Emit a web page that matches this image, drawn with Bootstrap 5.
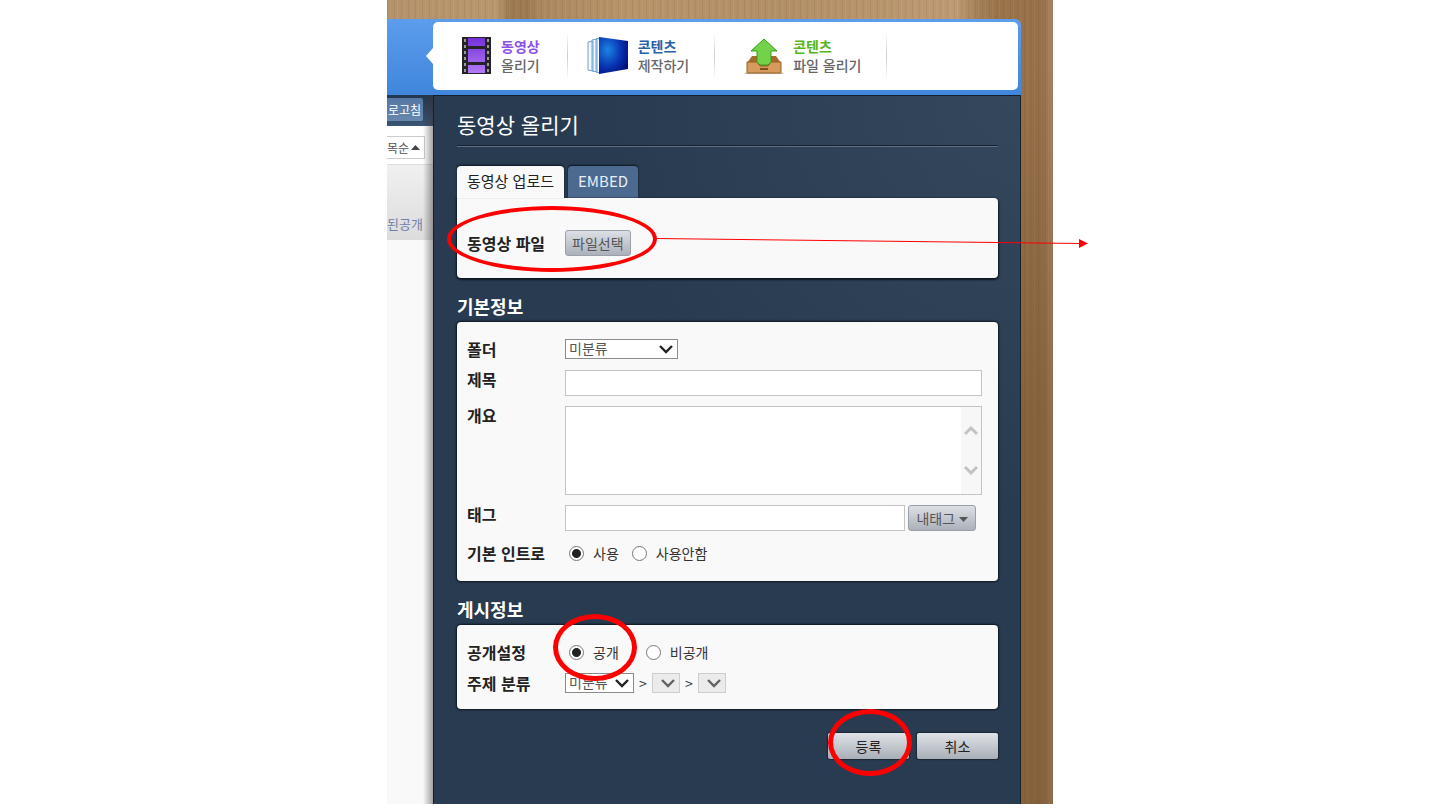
<!DOCTYPE html>
<html lang="ko">
<head>
<meta charset="utf-8">
<meta name="viewport" content="width=device-width, initial-scale=1">
<title>동영상 올리기</title>
<link href="https://cdn.jsdelivr.net/npm/bootstrap@5.3.0/dist/css/bootstrap.min.css" rel="stylesheet">
<style>
  body { font: 14px/20px "Noto Sans CJK KR", sans-serif; color: #333; background: #fff; }
  .stage { max-width: 666px; min-height: calc(100vh - 6px); padding: 19px 32px 0 0;
    background:
      linear-gradient(to bottom, transparent 60px, rgba(100,68,34,.35) 420px),
      repeating-linear-gradient(90deg, rgba(70,40,10,.08) 0 1px, transparent 1px 3px, rgba(255,230,190,.06) 3px 4px, transparent 4px 7px),
      linear-gradient(90deg, #b4936c 0, #b8966e 110px, #9d7a52 122px, #9d7a52 140px, #ac8860 155px, #b8946b 240px, #b28f67 400px, #bd9a73 570px, #a58059 590px, #9a744b 610px, #98714a 640px, #95704a 655px, #ab8560 666px); }
  .topbar { height: 76px; padding: 3px 3px 5px 46px; border-radius: 0 6px 0 0; background: linear-gradient(#5c9dec, #3f86dc); }
  .menu { height: 68px; border-radius: 5px; background: #fff; position: relative; padding-left: 28px; }
  .menu::before { content: ""; position: absolute; left: -7px; top: 26px; border: 8px solid transparent; border-right: 7px solid #fff; border-left: 0; }
  .menu a { gap: 9px; color: #666; font-weight: 500; line-height: 19px; text-decoration: none; }
  .menu b { display: block; font-weight: 700; }
  .menu svg { flex: none; }
  .t-violet { color: #8e50e8; }
  .t-blue { color: #285fa8; }
  .t-green { color: #55b51c; }
  .divide { width: 1px; height: 48px; background: linear-gradient(#fff, #ccc 50%, #fff); }
  .below { min-height: calc(100vh - 101px); }
  .side { width: 46px; flex: none; background: #f9f9f9; position: relative; }
  .side::after { content: ""; position: absolute; inset: 0 0 0 auto; width: 10px; background: linear-gradient(90deg, transparent, rgba(60,50,50,.45)); pointer-events: none; }
  .side-top { height: 31px; padding: 3px 10px 0 0; background: linear-gradient(#22364e, #3a5474); }
  .side button { display: flex; align-items: center; justify-content: flex-end; width: 100%; height: 23px; font-size: 12px; line-height: 20px; white-space: nowrap; }
  .reload { padding: 0 2px 0 0; border: 0; border-radius: 0 2px 2px 0; background: linear-gradient(#5477a3, #6887ae); color: #fff; }
  .side-sort { height: 39px; padding: 10px 8px 0 0; background: #fff; border-bottom: 1px solid #ddd; }
  .sort { gap: 2px; padding: 0 4px 0 0; border: 1px solid #ccc; border-left: 0; background: #fff; color: #555; }
  .side-item { height: 75px; padding: 48px 10px 0 0; text-align: right; white-space: nowrap; background: linear-gradient(#f0f0f0, #dcdcdc); }
  .side-item a { color: #7080ab; font-size: 13px; text-decoration: none; }
  .work { min-width: 0; padding: 14px 22px 42px 23px; border: solid #15202c; border-width: 1px 1px 0 1px;
    background: radial-gradient(ellipse 420px 420px at 100% 0, #34475d, #293b50); }
  h1 { font-size: 21px; line-height: 28px; margin: 0 0 19px; padding-bottom: 8px; color: #fff; font-weight: 400; border-bottom: 1px solid #5d7085; box-shadow: 0 -1px #16222f inset; }
  h2 { font-size: 18px; line-height: 24px; margin: 16px 0 4px; color: #fff; font-weight: 700; }
  .tabs { gap: 4px; }
  .tabs button { height: 32px; border: 0; border-radius: 4px 4px 0 0; box-shadow: 0 -1px 2px #0c1520; background: #4c6990; color: #e8eef6; padding: 0 10px 2px; font-size: 15px; }
  .tabs .on { background: #f9f9f9; color: #222; position: relative; z-index: 1; }
  .pane { position: relative; background: #f9f9f9; border-radius: 4px; box-shadow: 0 0 2px 1px #0c1520; padding: 17px 16px 16px 10px; }
  .pane-file { border-top-left-radius: 0; box-shadow: 0 1px 2px 1px #0c1520; padding: 32px 16px 22px 10px; }
  .cap { width: 98px; flex: none; font-size: 16px; line-height: 18px; font-weight: 700; color: #222; }
  .line { margin-top: 10px; }
  .line-after-pick { margin-top: 11px; }
  .radios { height: 24px; }
  .field { border: 1px solid #c4c4c4; background: #fff; height: 26px; width: 100%; min-width: 0; border-radius: 0; padding: 0 4px; }
  textarea.field { height: 89px; resize: none; display: block; }
  .pick { appearance: none; height: 20px; border: 1px solid #8c8c8c; color: #555; border-radius: 0; padding: 0 3px 2px; line-height: 16px; width: 113px;
    background: #fff url("data:image/svg+xml,%3Csvg xmlns='http://www.w3.org/2000/svg' width='14' height='9'%3E%3Cpath d='M1 1l6 6 6-6' fill='none' stroke='%23222' stroke-width='2.4'/%3E%3C/svg%3E") no-repeat right 4px center; }
  .pick-s { width: 69px; }
  .pick:disabled { width: 28px; background-color: #e6e6e6; border-color: #bbb; opacity: .7; }
  .sep { width: 18px; text-align: center; }
  .gbtn { border: 1px solid #9a9fa8; border-radius: 3px; background: linear-gradient(#dde0e6, #abb1ba); color: #555; height: 26px; padding: 0 6px; line-height: 22px; flex: none; }
  .gbtn-tag { padding: 0 7px; margin: 0 6px 0 3px; }
  .act { width: 81px; border: 0; border-radius: 2px; color: #222; box-shadow: 0 0 1px 1px #1a2734; background: linear-gradient(#dfe2e7, #a9afb8); }
  .actions { gap: 8px; margin-top: 24px; }
  input[type=radio] { appearance: none; width: 15px; height: 15px; margin: 0; border: 1px solid #777; border-radius: 50%; background: #fff; flex: none; }
  input[type=radio]:checked { background: radial-gradient(#222 0 4px, #fff 5px); }
  .opt { display: flex; align-items: center; gap: 9px; }
  .opt + .opt { margin-left: 13px; }
  .opt-far + .opt { margin-left: 27px; }
  .bars { position: absolute; right: 1px; top: 1px; width: 20px; height: 87px; background: #f7f7f7; pointer-events: none; }
  .ring { position: absolute; border: 5px solid #f00; border-radius: 50%; pointer-events: none; }
  .ring-file { left: -10px; top: 8px; width: 210px; height: 66px; border-width: 4px; }
  .ring-small { width: 84px; height: 67px; }
  .ring-open { left: 96px; top: -11px; }
  .ring-send { left: 0; top: -24px; }
  .arrow { position: absolute; left: 199px; top: 36px; pointer-events: none; overflow: visible; }
</style>
</head>
<body>
<main class="stage mx-auto">
  <header class="topbar">
    <nav class="menu d-flex align-items-center">
      <a href="#" class="d-flex align-items-center"><svg width="31" height="40" viewBox="0 0 31 40"><defs><linearGradient id="pv" x2="0" y2="1"><stop stop-color="#7430d8"/><stop offset="1" stop-color="#b27bf6"/></linearGradient></defs><path fill="#252229" d="M1 1h29v37H1z"/><path fill="url(#pv)" d="M7 2h17v8H7zM7 13h17v13H7zM7 29h17v8H7z"/><path d="M4 3v35M27 3v35" stroke="#999" stroke-width="2" stroke-dasharray="3 3"/></svg><span><b class="t-violet">동영상</b>올리기</span></a>
      <i class="divide" style="margin-left:27px;margin-right:18px"></i>
      <a href="#" class="d-flex align-items-center"><svg width="43" height="40" viewBox="0 0 43 40"><defs><radialGradient id="bl" cx=".3" cy=".35" r=".8"><stop stop-color="#1c84e4"/><stop offset=".6" stop-color="#0830b0"/><stop offset="1" stop-color="#001078"/></radialGradient></defs><path d="M2 6l5-1v30l-5-1zM6 4l5-1v33l-5-1zM10 3l5-1v35l-5-1z" fill="#f2f9ff" stroke="#6ba0cf"/><path d="M13 1l29 4v28l-29 5z" fill="url(#bl)"/></svg><span><b class="t-blue">콘텐츠</b>제작하기</span></a>
      <i class="divide" style="margin-left:25px;margin-right:29px"></i>
      <a href="#" class="d-flex align-items-center"><svg width="40" height="38" viewBox="0 0 40 38"><path d="M8 19h24l5 7v10H3V26z" fill="#a66a2c"/><path d="M1 36.500h38" stroke="#bbb"/><path d="M3 25h10l3 4h8l3-4h10v11H3z" fill="#d59a5c" stroke="#9a6025"/><path d="M16 32h8" stroke="#80501f" stroke-width="2"/><path d="M20 2l13 12h-6v11l-3 3h-8l-3-3V14H7z" fill="#72d34a" stroke="#3a9b1a"/></svg><span><b class="t-green">콘텐츠</b>파일 올리기</span></a>
      <i class="divide" style="margin-left:24px"></i>
    </nav>
  </header>
  <div class="below d-flex">
    <aside class="side">
      <div class="side-top"><button class="reload" type="button">로고침</button></div>
      <div class="side-sort"><button class="sort" type="button">목순<svg width="9" height="5"><path d="M0 5l4.500-5L9 5z" fill="#444"/></svg></button></div>
      <div class="side-item"><a href="#">된공개</a></div>
    </aside>
    <form class="work flex-grow-1">
      <h1>동영상 올리기</h1>
      <div class="tabs d-flex"><button type="button" class="on">동영상 업로드</button><button type="button">EMBED</button></div>
      <section class="pane pane-file">
        <div class="d-flex align-items-center"><label class="cap" for="file">동영상 파일</label><button id="file" type="button" class="gbtn">파일선택</button></div>
        <span class="ring ring-file"></span>
        <svg class="arrow" width="433" height="12"><path d="M0 4.500L424 9.500" stroke="#f00"/><path d="M423 5l9 4.500-9 4.500z" fill="#f00"/></svg>
      </section>
      <h2>기본정보</h2>
      <section class="pane">
        <div class="d-flex align-items-center"><label class="cap" for="folder">폴더</label><select id="folder" class="pick"><option>미분류</option></select></div>
        <div class="line-after-pick d-flex"><label class="cap" for="title">제목</label><input id="title" class="field" type="text"></div>
        <div class="line d-flex"><label class="cap" for="memo">개요</label>
          <div class="position-relative flex-grow-1"><textarea id="memo" class="field"></textarea><svg class="bars" viewBox="0 0 20 87"><path d="M4 27l6-6 6 6M4 60l6 6 6-6" fill="none" stroke="#c2c2c2" stroke-width="3"/></svg></div></div>
        <div class="line d-flex"><label class="cap" for="tag">태그</label><input id="tag" class="field" type="text"><button type="button" class="gbtn gbtn-tag">내태그 <svg width="9" height="6"><path d="M0 0h9L4.500 5z" fill="#555"/></svg></button></div>
        <div class="line radios d-flex align-items-center"><span class="cap">기본 인트로</span><label class="opt ms-1"><input type="radio" name="intro" checked>사용</label><label class="opt"><input type="radio" name="intro">사용안함</label></div>
      </section>
      <h2>게시정보</h2>
      <section class="pane">
        <div class="d-flex align-items-center"><span class="cap">공개설정</span><label class="opt opt-far ms-1"><input type="radio" name="open" checked>공개</label><label class="opt"><input type="radio" name="open">비공개</label></div>
        <div class="line-after-pick d-flex align-items-center"><label class="cap" for="topic">주제 분류</label><select id="topic" class="pick pick-s"><option>미분류</option></select><span class="sep">&gt;</span><select class="pick" disabled aria-label="중분류"></select><span class="sep">&gt;</span><select class="pick" disabled aria-label="소분류"></select></div>
        <span class="ring ring-small ring-open"></span>
      </section>
      <div class="actions d-flex justify-content-end"><span class="position-relative"><button type="button" class="gbtn act">등록</button><span class="ring ring-small ring-send"></span></span><button type="button" class="gbtn act">취소</button></div>
    </form>
  </div>
</main>
<script src="https://cdn.jsdelivr.net/npm/bootstrap@5.3.0/dist/js/bootstrap.bundle.min.js"></script>
</body>
</html>
